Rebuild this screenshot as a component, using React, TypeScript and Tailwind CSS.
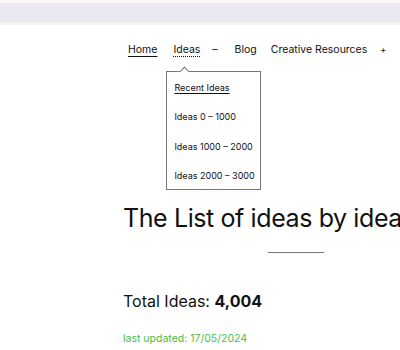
export default function App() {
  return (
    <div
      className="w-[400px] h-[350px] overflow-hidden bg-white text-[#111]"
      style={{ fontFamily: 'Inter, "Noto Sans", sans-serif' }}
    >
      <div className="h-[3px] bg-[#fbf6f7]" />
      <div className="h-[19px] bg-[#e9e8ee]" />
      <div className="h-[3px] bg-[#f6f4f2]" />

      <nav className="mt-[17px] flex items-center pl-[128px] text-[10.5px] leading-[16px] whitespace-nowrap">
        <a className="underline underline-offset-[3px] decoration-1">Home</a>
        <div className="relative ml-[16px]">
          <a className="underline decoration-dotted underline-offset-[3px] decoration-1">Ideas</a>
          <div className="absolute left-[-7px] top-[29px] w-[95px] h-[119px] border border-[#777] bg-white text-[9px] leading-[13px]">
            <div className="absolute left-[14px] top-[-4.5px] w-[7px] h-[7px] rotate-45 border-l border-t border-[#777] bg-white" />
            <div className="flex flex-col pl-[7px] pt-[8.5px] gap-[16.5px]">
              <a className="underline underline-offset-2">Recent Ideas</a>
              <a>Ideas 0 – 1000</a>
              <a>Ideas 1000 – 2000</a>
              <a>Ideas 2000 – 3000</a>
            </div>
          </div>
        </div>
        <span className="ml-[12px]">–</span>
        <a className="ml-[17px]">Blog</a>
        <a className="ml-[14px]">Creative Resources</a>
        <span className="ml-[13px] text-[9px]">+</span>
      </nav>

      <div className="pl-[123px] whitespace-nowrap">
        <h1 className="mt-[144.5px] text-[25px] leading-[30px] tracking-[-0.4px]">The List of ideas by idea ranges</h1>
        <div className="mt-[19.5px] ml-[145px] w-[56px] h-px bg-[#777]" />
        <p className="mt-[38px] text-[16px] leading-[20px]">
          Total Ideas: <b className="font-bold">4,004</b>
        </p>
        <p className="mt-[21px] text-[10.5px] leading-[14px] text-[#45bf4a]">last updated: 17/05/2024</p>
      </div>
    </div>
  );
}
